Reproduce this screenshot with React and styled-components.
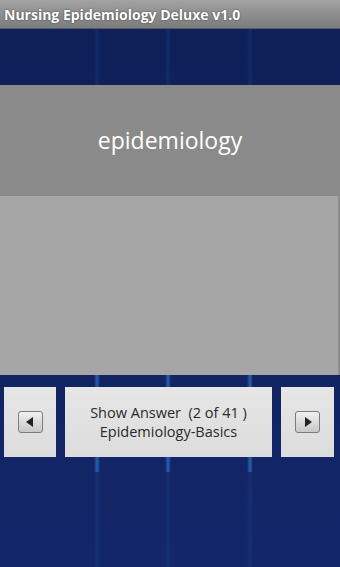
import React from "react";
import styled, { createGlobalStyle } from "styled-components";

const GlobalStyle = createGlobalStyle`
  html, body {
    margin: 0;
    padding: 0;
    width: 340px;
    height: 567px;
    overflow: hidden;
  }
  body {
    font-family: "Open Sans", "DejaVu Sans", sans-serif;
  }
`;

const streaks = (a) => `linear-gradient(90deg,
  transparent 94px, rgba(50,130,220,${a}) 97px, transparent 100px,
  transparent 165px, rgba(50,130,220,${a}) 168px, transparent 171px,
  transparent 247px, rgba(50,130,220,${a}) 250px, transparent 253px)`;

const Screen = styled.div`
  width: 340px;
  height: 567px;
  display: flex;
  flex-direction: column;
  background:
    ${streaks(0.6)} 0 372px / 340px 100px no-repeat,
    ${streaks(0.12)},
    linear-gradient(180deg, #0f1f58 0%, #11235e 50%, #13266a 100%);
`;

const TitleBar = styled.div`
  height: 28px;
  flex-shrink: 0;
  display: flex;
  align-items: center;
  padding-left: 4px;
  background: linear-gradient(180deg, #a4a4a4 0%, #8e8e8e 50%, #7c7c7c 100%);
  border-bottom: 1px solid #5c5c5c;
  color: #fff;
  font-weight: bold;
  font-size: 14px;
  text-shadow: 0 0 2px rgba(0,0,0,0.6);
`;

const Spacer = styled.div`
  height: ${p => p.h}px;
  flex-shrink: 0;
`;

const Question = styled.div`
  height: 111px;
  flex-shrink: 0;
  display: flex;
  align-items: center;
  justify-content: center;
  background: #8a8a8a;
  color: #fff;
  font-size: 23px;
  padding-bottom: 2px;
  box-sizing: border-box;
`;

const Answer = styled.div`
  height: 179px;
  flex-shrink: 0;
  background: #a6a6a6;
  border-right: 2px solid #8e8e8e;
  box-sizing: border-box;
`;

const ButtonRow = styled.div`
  display: flex;
  gap: 9px;
  padding: 0 6px 0 4px;
  height: 70px;
  flex-shrink: 0;
`;

const Btn = styled.div`
  flex: ${p => (p.wide ? "1" : "0 0 " + p.w + "px")};
  background: linear-gradient(180deg, #e6e6e6 0%, #dcdcdc 100%);
  display: flex;
  align-items: center;
  justify-content: center;
  flex-direction: column;
  color: #2a2a2a;
  font-size: 14.5px;
  line-height: 19px;
  text-align: center;
`;

const ArrowBox = styled.div`
  width: 23px;
  height: 20px;
  border: 1px solid #7c7c7c;
  border-radius: 3px;
  background: linear-gradient(180deg, #f0f0f0 0%, #c8c8c8 100%);
  display: flex;
  align-items: center;
  justify-content: center;
`;

const Arrow = ({ dir }) => (
  <svg width="10" height="12" viewBox="0 0 10 12">
    {dir === "left" ? (
      <polygon points="8,1 8,11 1,6" fill="#222" />
    ) : (
      <polygon points="2,1 2,11 9,6" fill="#222" />
    )}
  </svg>
);

export default function App() {
  return (
    <>
      <GlobalStyle />
      <Screen>
        <TitleBar>Nursing Epidemiology Deluxe v1.0</TitleBar>
        <Spacer h={56} />
        <Question>epidemiology</Question>
        <Answer />
        <Spacer h={12} />
        <ButtonRow>
          <Btn w={52}>
            <ArrowBox><Arrow dir="left" /></ArrowBox>
          </Btn>
          <Btn wide>
            <div>Show Answer&nbsp; (2 of 41 )</div>
            <div>Epidemiology-Basics</div>
          </Btn>
          <Btn w={53}>
            <ArrowBox><Arrow dir="right" /></ArrowBox>
          </Btn>
        </ButtonRow>
      </Screen>
    </>
  );
}
